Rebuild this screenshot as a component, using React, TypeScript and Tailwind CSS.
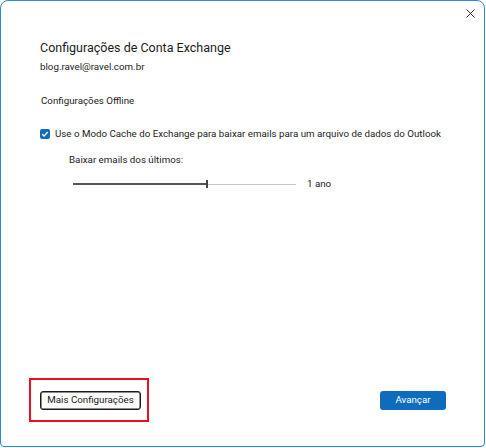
export default function App() {
  return (
    <div className="h-[448px] w-[486px] bg-white font-[Roboto,sans-serif] text-[#1b1b1b]">
      <div className="flex h-[447px] w-[485px] flex-col rounded-t-[8px] rounded-b-[4px] border border-[#2b88d8] bg-white">
        {/* Title bar */}
        <div className="flex h-[25px] justify-end pr-[8px] pt-[7px]">
          <button type="button" className="flex h-[11px] w-[11px] items-center justify-center text-[#333]">
            <svg width="9" height="9" viewBox="0 0 9 9" fill="none" stroke="currentColor" strokeWidth="1">
              <path d="M0.5 0.5 L8.5 8.5 M8.5 0.5 L0.5 8.5" />
            </svg>
          </button>
        </div>

        {/* Header */}
        <div className="pl-[39px] pt-[14px]">
          <h1 className="text-[12.5px] leading-[16px]">Configurações de Conta Exchange</h1>
          <p className="mt-[4px] text-[9.75px] leading-[14px]">blog.ravel@ravel.com.br</p>
        </div>

        {/* Offline */}
        <p className="mt-[20px] pl-[40px] text-[9.75px] leading-[14px]">Configurações Offline</p>

        <label className="mt-[19px] flex h-[14px] items-center gap-[5px] pl-[39px] text-[9.75px] leading-[14px]">
          <span className="flex h-[10px] w-[10px] items-center justify-center rounded-[2px] bg-[#0f6cbd]">
            <svg width="8" height="8" viewBox="0 0 8 8" fill="none" stroke="white" strokeWidth="1.3">
              <path d="M1.2 4.2 L3.1 6 L6.8 2" />
            </svg>
          </span>
          <span>Use o Modo Cache do Exchange para baixar emails para um arquivo de dados do Outlook</span>
        </label>

        <p className="mt-[12px] pl-[68px] text-[9.75px] leading-[14px]">Baixar emails dos últimos:</p>

        <div className="mt-[12px] flex h-[10px] items-center pl-[72px]">
          <div className="relative flex h-[10px] w-[223px] items-center">
            <div className="h-[2px] w-[134px] bg-[#555]" />
            <div className="h-[1px] flex-1 bg-[#c8c8c8]" />
            <div className="absolute left-[133px] top-[1px] h-[8px] w-[1.5px] bg-[#444]" />
          </div>
          <span className="ml-[11px] text-[9.75px] leading-[14px]">1 ano</span>
        </div>

        <div className="flex-1" />

        {/* Footer */}
        <div className="flex items-center justify-between pb-[24px] pl-[28px] pr-[38px]">
          <div className="flex h-[44px] w-[120px] items-center border-2 border-[#e81123] pl-[9px]">
            <button
              type="button"
              className="flex h-[19px] w-[101px] items-center justify-center rounded-[3px] border border-[#1b1b1b] bg-[#fdfdfd] text-[9.75px] leading-none shadow-[inset_0_0_0_0.5px_#1b1b1b]"
            >
              Mais Configurações
            </button>
          </div>
          <button
            type="button"
            className="flex h-[19px] w-[66px] items-center justify-center rounded-[3px] bg-[#0f6cbd] text-[9.75px] leading-none text-white"
          >
            Avançar
          </button>
        </div>
      </div>
    </div>
  );
}
